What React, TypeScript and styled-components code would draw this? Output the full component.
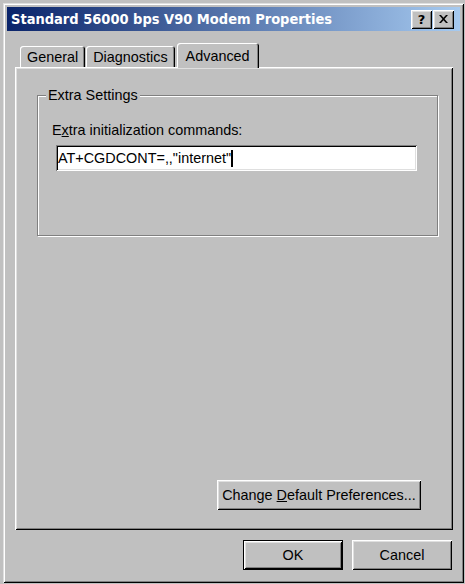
import styled, { createGlobalStyle } from 'styled-components'

const FACE = '#c0c0c0'
const LIGHT = '#dfdfdf'
const SHADOW = '#808080'

const GlobalStyle = createGlobalStyle`
  html, body {
    margin: 0;
    padding: 0;
    background: ${FACE};
  }
  body {
    font-family: "Liberation Sans", Arial, sans-serif;
    font-size: 14.4px;
    color: #000;
  }
`

function CloseGlyph() {
  return (
    <svg width="9" height="8" viewBox="0 0 9 8">
      <path d="M0 0h2l2.5 2.8L7 0h2L5.5 4 9 8H7L4.5 5.2 2 8H0l3.5-4z" fill="#000" />
    </svg>
  )
}

function App() {
  return (
    <>
      <GlobalStyle />
      <WindowStyled>
        <TitleBarStyled>
          <TitleText>Standard 56000 bps V90 Modem Properties</TitleText>
          <CaptionButtons>
            <CaptionButton>?</CaptionButton>
            <CaptionButton>
              <CloseGlyph />
            </CaptionButton>
          </CaptionButtons>
        </TitleBarStyled>
        <BodyStyled>
          <TabStrip>
            <Tab>General</Tab>
            <Tab>Diagnostics</Tab>
            <Tab $active>Advanced</Tab>
          </TabStrip>
          <PanelStyled>
            <GroupBox>
              <GroupLegend>Extra Settings</GroupLegend>
              <FieldLabel>
                E<u>x</u>tra initialization commands:
              </FieldLabel>
              <TextField>
                <span>AT+CGDCONT=,,"internet"</span>
                <Caret />
              </TextField>
            </GroupBox>
            <PrefsButton>
              <span>
                Change <u>D</u>efault Preferences...
              </span>
            </PrefsButton>
          </PanelStyled>
          <FooterRow>
            <PushButton $default>OK</PushButton>
            <PushButton>Cancel</PushButton>
          </FooterRow>
        </BodyStyled>
      </WindowStyled>
    </>
  )
}

const raised = `
  box-shadow: inset 1px 1px 0 #fff, inset -1px -1px 0 #000,
    inset 2px 2px 0 ${LIGHT}, inset -2px -2px 0 ${SHADOW};
`

const WindowStyled = styled.div`
  margin: 3px;
  width: 461px;
  height: 580px;
  box-sizing: border-box;
  padding: 4px;
  display: flex;
  flex-direction: column;
  background: ${FACE};
  box-shadow: inset 1px 1px 0 ${LIGHT}, inset -1px -1px 0 #000,
    inset 2px 2px 0 #fff, inset -2px -2px 0 ${SHADOW};
`

const TitleBarStyled = styled.div`
  height: 24px;
  flex-shrink: 0;
  display: flex;
  align-items: center;
  justify-content: space-between;
  padding: 0 6px 0 4px;
  background: linear-gradient(90deg, #0a246a 0%, #a6caf0 100%);
`

const TitleText = styled.span`
  color: #fff;
  font-family: "DejaVu Sans Condensed", "DejaVu Sans", sans-serif;
  font-weight: 700;
  font-size: 14.5px;
  white-space: nowrap;
`

const CaptionButtons = styled.div`
  display: flex;
  gap: 1px;
`

const CaptionButton = styled.div`
  width: 21px;
  height: 19px;
  box-sizing: border-box;
  display: flex;
  align-items: center;
  justify-content: center;
  background: ${FACE};
  font-family: "DejaVu Sans", sans-serif;
  font-weight: 700;
  font-size: 13px;
  line-height: 1;
  ${raised}
`

const BodyStyled = styled.div`
  flex: 1;
  display: flex;
  flex-direction: column;
  padding: 12px 7px 9px 8px;
`

const TabStrip = styled.div`
  display: flex;
  align-items: flex-end;
  height: 24px;
  padding-left: 5px;
`

const Tab = styled.div<{ $active?: boolean }>`
  position: relative;
  box-sizing: border-box;
  height: ${(p) => (p.$active ? 25 : 21)}px;
  margin: ${(p) => (p.$active ? '0 -2px -1px 1px' : '0 1px 0 0')};
  padding: 0 ${(p) => (p.$active ? 9 : 7)}px;
  display: flex;
  align-items: center;
  background: ${FACE};
  border-radius: 3px 3px 0 0;
  z-index: ${(p) => (p.$active ? 1 : 0)};
  box-shadow: inset 1px 1px 0 #fff, inset -1px 0 0 #000, inset -2px 0 0 ${SHADOW};
  white-space: nowrap;
`

const PanelStyled = styled.div`
  flex: 1;
  display: flex;
  flex-direction: column;
  box-shadow: inset 1px 1px 0 #fff, inset -1px -1px 0 #000,
    inset 2px 2px 0 ${LIGHT}, inset -2px -2px 0 ${SHADOW};
`

const GroupBox = styled.div`
  position: relative;
  margin: 28px 15px 0 22px;
  padding: 26px 20px 64px 14px;
  border: 1px solid ${SHADOW};
  box-shadow: inset 1px 1px 0 #fff, 1px 1px 0 #fff;
`

const GroupLegend = styled.span`
  position: absolute;
  top: -9px;
  left: 8px;
  padding: 0 2px;
  line-height: 16px;
  background: ${FACE};
`

const FieldLabel = styled.div`
  line-height: 16px;
`

const TextField = styled.div`
  margin: 7px 0 0 4px;
  height: 26px;
  box-sizing: border-box;
  padding: 0 2px;
  display: flex;
  align-items: center;
  background: #fff;
  white-space: pre;
  box-shadow: inset 1px 1px 0 ${SHADOW}, inset -1px -1px 0 #fff,
    inset 2px 2px 0 #000, inset -2px -2px 0 ${LIGHT};
`

const Caret = styled.span`
  display: inline-block;
  width: 2px;
  height: 17px;
  background: #000;
`

const ButtonBase = styled.div`
  box-sizing: border-box;
  height: 30px;
  display: flex;
  align-items: center;
  justify-content: center;
  background: ${FACE};
  white-space: nowrap;
  ${raised}
`

const PrefsButton = styled(ButtonBase)`
  align-self: flex-end;
  width: 204px;
  margin: auto 32px 20px 0;
`

const FooterRow = styled.div`
  display: flex;
  justify-content: flex-end;
  gap: 9px;
  margin-top: 10px;
  padding-right: 1px;
`

const PushButton = styled(ButtonBase)<{ $default?: boolean }>`
  width: 100px;
  ${(p) =>
    p.$default &&
    `
    border: 1px solid #000;
  `}
`

export default App
